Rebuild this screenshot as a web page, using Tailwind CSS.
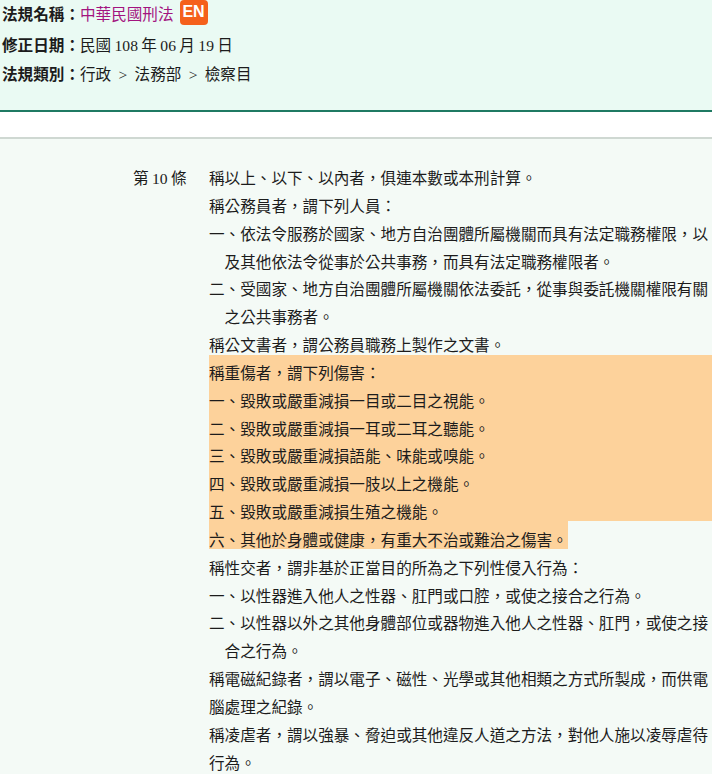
<!doctype html>
<html lang="zh-Hant">
<head>
  <meta charset="utf-8">
  <title>中華民國刑法 第 10 條</title>
  <script src="https://cdn.jsdelivr.net/npm/@tailwindcss/browser@4"></script>
</head>
<body class="h-[774px] overflow-hidden bg-white text-[15.6px] text-[#1c1c1c] [word-spacing:-0.5px] font-['Liberation_Serif','Noto_Sans_CJK_TC',serif]">

<!-- 法規資訊 -->
<header class="h-[112px] bg-[#eafaf3] border-b-2 border-[#1f7a63] pl-[2px]">
  <div class="h-[29px] flex items-start">
    <b class="leading-[27px] mt-[1px]">法規名稱：</b>
    <a class="leading-[27px] mt-[1px] text-[#a3147f]">中華民國刑法</a>
    <span class="ml-[6px] w-[28px] h-[25px] rounded-[4px] bg-[#f5601b] text-white text-[16px] font-bold leading-[24px] text-center font-['Liberation_Sans',sans-serif]">EN</span>
  </div>
  <div class="h-[29px] leading-[29px] mt-[2px]"><b>修正日期：</b>民國 108 年 06 月 19 日</div>
  <div class="h-[29px] leading-[29px] [word-spacing:-0.25px]"><b>法規類別：</b>行政 &nbsp;&gt;&nbsp; 法務部 &nbsp;&gt;&nbsp; 檢察目</div>
</header>

<div class="h-[25px] bg-white"></div>

<!-- 條文 -->
<main class="border-t-2 border-[#cfd8d2] bg-[#f4faf6] pt-[26px] flex leading-[27.84px]">
  <div class="w-[209px] shrink-0 pl-[133px]">第 10 條</div>
  <div class="min-w-0 flex-1">
    <div>稱以上、以下、以內者，俱連本數或本刑計算。</div>
    <div>稱公務員者，謂下列人員：</div>
    <div class="pl-[1em] -indent-[1em]">一、依法令服務於國家、地方自治團體所屬機關而具有法定職務權限，以及其他依法令從事於公共事務，而具有法定職務權限者。</div>
    <div class="pl-[1em] -indent-[1em]">二、受國家、地方自治團體所屬機關依法委託，從事與委託機關權限有關之公共事務者。</div>
    <div>稱公文書者，謂公務員職務上製作之文書。</div>
    <!-- 標示底色比文字行高約 5px -->
    <div class="-mt-[4.88px] h-[166px] pt-[4.88px] bg-[#fdd29b]">
      <div>稱重傷者，謂下列傷害：</div>
      <div>一、毀敗或嚴重減損一目或二目之視能。</div>
      <div>二、毀敗或嚴重減損一耳或二耳之聽能。</div>
      <div>三、毀敗或嚴重減損語能、味能或嗅能。</div>
      <div>四、毀敗或嚴重減損一肢以上之機能。</div>
      <div>五、毀敗或嚴重減損生殖之機能。</div>
    </div>
    <div class="w-fit h-[28px] pt-[5.92px] bg-[#fdd29b]">六、其他於身體或健康，有重大不治或難治之傷害。</div>
    <div class="mt-[5.76px]">稱性交者，謂非基於正當目的所為之下列性侵入行為：</div>
    <div class="pl-[1em] -indent-[1em]">一、以性器進入他人之性器、肛門或口腔，或使之接合之行為。</div>
    <div class="pl-[1em] -indent-[1em]">二、以性器以外之其他身體部位或器物進入他人之性器、肛門，或使之接合之行為。</div>
    <div>稱電磁紀錄者，謂以電子、磁性、光學或其他相類之方式所製成，而供電腦處理之紀錄。</div>
    <div>稱凌虐者，謂以強暴、脅迫或其他違反人道之方法，對他人施以凌辱虐待行為。</div>
  </div>
</main>

</body>
</html>
